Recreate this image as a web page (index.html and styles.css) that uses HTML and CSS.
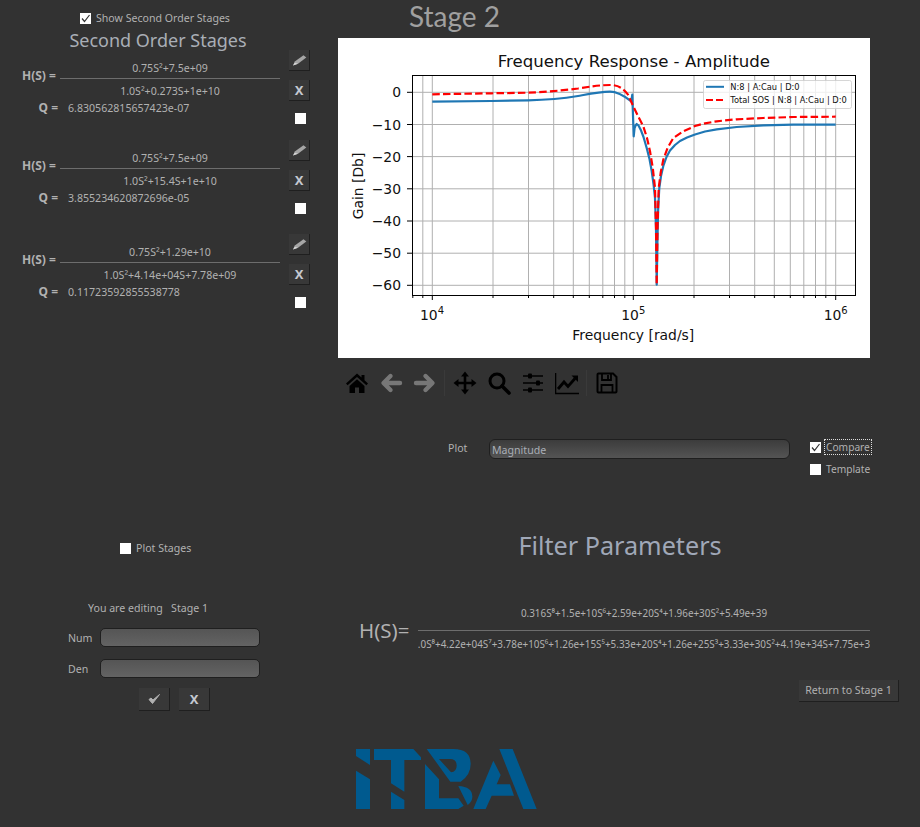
FILE: index.html
```html
<!DOCTYPE html>
<html lang="en">
<head>
    <meta charset="UTF-8">
    <title>Stage 2</title>
    <link rel="stylesheet" href="styles.css">
</head>
<body>
    <div class="app">
        <!-- Left column: second order stages -->
        <div class="left">
            <div class="show-row">
                <span class="box"><svg viewBox="0 0 11 11"><path d="M2 5.5 L4.5 8.5 L9.5 2" fill="none" stroke="#333" stroke-width="1.2"/></svg></span>
                <span>Show Second Order Stages</span>
            </div>
            <div class="sos-title">Second Order Stages</div>

            <div class="stage stage-first">
                <div class="formula">
                    <div class="tf">
                        <div class="tf-label">H(S) =</div>
                        <div class="frac">
                            <div class="num">0.75S²+7.5e+09</div>
                            <div class="bar"></div>
                            <div class="den">1.0S²+0.273S+1e+10</div>
                        </div>
                    </div>
                    <div class="q-row"><span class="q-label">Q =</span><span class="q-value">6.830562815657423e-07</span></div>
                </div>
                <div class="stage-btns">
                    <div class="btn"><svg viewBox="0 0 20 20"><path d="M4 15.5L5.8 11.5L14.5 5.2L17.3 7.4L9 13.8Z" fill="#a6a6a6"/><path d="M4 15.5L5.8 12.8L9 13.8Z" fill="#d8d8d8"/></svg></div>
                    <div class="btn btn-x">X</div>
                    <span class="box box-stage"></span>
                </div>
            </div>

            <div class="stage">
                <div class="formula">
                    <div class="tf">
                        <div class="tf-label">H(S) =</div>
                        <div class="frac">
                            <div class="num">0.75S²+7.5e+09</div>
                            <div class="bar"></div>
                            <div class="den">1.0S²+15.4S+1e+10</div>
                        </div>
                    </div>
                    <div class="q-row"><span class="q-label">Q =</span><span class="q-value">3.855234620872696e-05</span></div>
                </div>
                <div class="stage-btns">
                    <div class="btn"><svg viewBox="0 0 20 20"><path d="M4 15.5L5.8 11.5L14.5 5.2L17.3 7.4L9 13.8Z" fill="#a6a6a6"/><path d="M4 15.5L5.8 12.8L9 13.8Z" fill="#d8d8d8"/></svg></div>
                    <div class="btn btn-x">X</div>
                    <span class="box box-stage"></span>
                </div>
            </div>

            <div class="stage">
                <div class="formula">
                    <div class="tf">
                        <div class="tf-label">H(S) =</div>
                        <div class="frac">
                            <div class="num">0.75S²+1.29e+10</div>
                            <div class="bar"></div>
                            <div class="den">1.0S²+4.14e+04S+7.78e+09</div>
                        </div>
                    </div>
                    <div class="q-row"><span class="q-label">Q =</span><span class="q-value">0.11723592855538778</span></div>
                </div>
                <div class="stage-btns">
                    <div class="btn"><svg viewBox="0 0 20 20"><path d="M4 15.5L5.8 11.5L14.5 5.2L17.3 7.4L9 13.8Z" fill="#a6a6a6"/><path d="M4 15.5L5.8 12.8L9 13.8Z" fill="#d8d8d8"/></svg></div>
                    <div class="btn btn-x">X</div>
                    <span class="box box-stage"></span>
                </div>
            </div>

            <div class="plot-stages">
                <span class="box"></span>
                <span>Plot Stages</span>
            </div>

            <div class="editing">You are editing&nbsp;&nbsp; Stage 1</div>
            <div class="edit-row"><span class="edit-label">Num</span><div class="edit-input"></div></div>
            <div class="edit-row"><span class="edit-label">Den</span><div class="edit-input"></div></div>
            <div class="edit-btns">
                <div class="btn btn-wide"><svg viewBox="0 0 30 22"><path d="M10 11.5L13.5 15.5L20.5 6.5L14 12L12 10Z" fill="#b1b1b1" stroke="#b1b1b1" stroke-width="1"/></svg></div>
                <div class="btn btn-wide btn-x">X</div>
            </div>
        </div>

        <!-- Right column: plot and filter parameters -->
        <div class="right">
            <div class="stage-title">Stage 2</div>
            <svg class="plot" width="532" height="320" viewBox="0 0 532 320">
                <rect width="532" height="320" fill="#fff"/>
                <!-- grid -->
                <path fill="none" stroke="#b0b0b0" stroke-width="1" d="M84.8 37V257M94.3 37V257M155 37V257M190.5 37V257M215.7 37V257M235.3 37V257M251.3 37V257M264.8 37V257M276.5 37V257M286.8 37V257M295.3 37V257M356 37V257M391.5 37V257M416.7 37V257M436.3 37V257M452.3 37V257M465.8 37V257M477.5 37V257M487.8 37V257M497.7 37V257M74 54.3H517M74 86.5H517M74 118.6H517M74 150.8H517M74 183H517M74 215.2H517M74 247.3H517"/>
                <!-- curves -->
                <path fill="none" stroke="#1f77b4" stroke-width="2.2" stroke-linejoin="round" d="M94.3 63.7L153.3 63L190 62.3C205 62 225 60.5 240 58C252 55.8 262 53.7 272 53.7C279 53.7 285 57 293.3 63.3L294.3 56.7L295.7 98.3L296.6 90L297.7 87.3L298.7 86L300.5 87.5L302.7 91.7L305.5 99L308.7 110L311.5 121L313.7 133L315.5 146L317 160L318 190L318.7 246.7L319.5 200L320.2 170L321.3 150L323 138L325.3 128L328.5 119L332 112.5L337 107L342 103L349 99.5L357 96.5L367 93.5L378.7 91.3L398.7 89L425.3 87.3L455.3 86.7L497.7 86.7"/>
                <path fill="none" stroke="#f00" stroke-width="2.2" stroke-dasharray="7.5 3.2" stroke-linejoin="round" d="M94.3 56.3L153.3 55.3L190 54.7C205 54.2 225 52.5 240 50.5C252 48.7 262 47 272 47C280 47 285 50 290 56.7L295.3 68.3L300 78L305.3 88.3L309 100L312 113.3L314.8 130L317 150L318 190L318.7 246.7L319.5 190L320.7 150L322.8 134L325.3 121.7L329.5 110L335.3 100L345 93.5L357 88L367 85.3L378.7 83.3L398.7 81.3L425.3 80L455.3 79L497.7 78.7"/>
                <!-- ticks -->
                <path fill="none" stroke="#000" stroke-width="1" d="M94.3 257V262M295.3 257V262M497.7 257V262M74 54.3H69M74 86.5H69M74 118.6H69M74 150.8H69M74 183H69M74 215.2H69M74 247.3H69M74.8 257V260M84.8 257V260M155 257V260M190.5 257V260M215.7 257V260M235.3 257V260M251.3 257V260M264.8 257V260M276.5 257V260M286.8 257V260M356 257V260M391.5 257V260M416.7 257V260M436.3 257V260M452.3 257V260M465.8 257V260M477.5 257V260M487.8 257V260"/>
                <rect x="74.5" y="37.5" width="443" height="220" fill="none" stroke="#000" stroke-width="1"/>
                <!-- legend -->
                <rect x="365.5" y="42.5" width="148" height="28" rx="2" fill="#fff" fill-opacity="0.8" stroke="#ccc" stroke-opacity="0.8"/>
                <path d="M368 48.8H386" stroke="#1f77b4" stroke-width="2"/>
                <path d="M368 62H386" stroke="#f00" stroke-width="2" stroke-dasharray="7 3"/>
                <g class="plot-text">
                    <text class="legend-text" x="392.3" y="52">N:8 | A:Cau | D:0</text>
                    <text class="legend-text" x="392.3" y="65">Total SOS | N:8 | A:Cau | D:0</text>
                    <text class="plot-title" x="295.8" y="29" text-anchor="middle">Frequency Response - Amplitude</text>
                    <text x="63" y="59" text-anchor="end">0</text>
                    <text x="63" y="91.5" text-anchor="end">−10</text>
                    <text x="63" y="123.6" text-anchor="end">−20</text>
                    <text x="63" y="155.8" text-anchor="end">−30</text>
                    <text x="63" y="188" text-anchor="end">−40</text>
                    <text x="63" y="220.2" text-anchor="end">−50</text>
                    <text x="63" y="252.3" text-anchor="end">−60</text>
                    <text x="94" y="281.5" text-anchor="middle">10<tspan class="exp" dy="-6">4</tspan></text>
                    <text x="295.3" y="281.5" text-anchor="middle">10<tspan class="exp" dy="-6">5</tspan></text>
                    <text x="497.7" y="281.5" text-anchor="middle">10<tspan class="exp" dy="-6">6</tspan></text>
                    <text x="295.3" y="301.5" text-anchor="middle">Frequency [rad/s]</text>
                    <text transform="translate(25 148) rotate(-90)" text-anchor="middle">Gain [Db]</text>
                </g>
            </svg>

            <div class="toolbar">
                <div class="tool"><svg viewBox="0 0 24 24"><path d="M12 2.5L1 12.5L2.6 14.3L12 6L21.4 14.3L23 12.5L19.5 9.3V4H16.5V6.6ZM4.5 15V22H10V16.5H14V22H19.5V15L12 8.3Z"/></svg></div>
                <div class="tool"><svg viewBox="0 0 24 24"><path d="M21 12H5M11.5 5L4.5 12L11.5 19" fill="none" stroke="#777" stroke-width="4.4" stroke-linecap="round" stroke-linejoin="round"/></svg></div>
                <div class="tool"><svg viewBox="0 0 24 24"><path d="M3 12H19M12.5 5L19.5 12L12.5 19" fill="none" stroke="#777" stroke-width="4.4" stroke-linecap="round" stroke-linejoin="round"/></svg></div>
                <div class="tool-sep"></div>
                <div class="tool"><svg viewBox="0 0 24 24"><path d="M12 3V21M3 12H21" stroke="#000" stroke-width="2.6"/><path d="M12 0.5L16 5.5H8ZM12 23.5L8 18.5H16ZM0.5 12L5.5 8V16ZM23.5 12L18.5 16V8Z"/></svg></div>
                <div class="tool"><svg viewBox="0 0 24 24"><circle cx="10" cy="10" r="7" fill="none" stroke="#000" stroke-width="3"/><path d="M15 15L22 22" stroke="#000" stroke-width="3.6" stroke-linecap="round"/></svg></div>
                <div class="tool"><svg viewBox="0 0 24 24"><path d="M2 5H22M2 12H22M2 19H22" stroke="#000" stroke-width="1.6"/><rect x="7" y="2.5" width="4" height="5" rx="1"/><rect x="15" y="9.5" width="4" height="5" rx="1"/><rect x="7" y="16.5" width="4" height="5" rx="1"/></svg></div>
                <div class="tool"><svg viewBox="0 0 24 24"><path d="M0.5 2V22.5H24" fill="none" stroke="#000" stroke-width="1.6"/><path d="M3 18L9 11L13 15.5L20 7.5" fill="none" stroke="#000" stroke-width="2.8"/><path d="M16.5 4.5H23V11Z"/></svg></div>
                <div class="tool-sep"></div>
                <div class="tool"><svg viewBox="0 0 24 24"><path d="M3.5 2.5H18L21.5 6V20.5Q21.5 21.5 20.5 21.5H3.5Q2.5 21.5 2.5 20.5V3.5Q2.5 2.5 3.5 2.5Z" fill="none" stroke="#000" stroke-width="2"/><path d="M7 3V9H16V3M13 4V8M6.5 21V14H17.5V21" fill="none" stroke="#000" stroke-width="1.8"/></svg></div>
            </div>

            <div class="plot-row">
                <span class="plot-label">Plot</span>
                <div class="combo">Magnitude</div>
                <div class="plot-checks">
                    <div class="check-row"><span class="box"><svg viewBox="0 0 11 11"><path d="M2 5.5 L4.5 8.5 L9.5 2" fill="none" stroke="#333" stroke-width="1.2"/></svg></span><span class="focus">Compare</span></div>
                    <div class="check-row"><span class="box"></span><span class="nofocus">Template</span></div>
                </div>
            </div>

            <div class="filter-title">Filter Parameters</div>

            <div class="big-tf">
                <div class="big-label">H(S)=</div>
                <div class="big-frac">
                    <div class="big-line">0.316S⁸+1.5e+10S⁶+2.59e+20S⁴+1.96e+30S²+5.49e+39</div>
                    <div class="bar"></div>
                    <div class="big-line big-den"><span>1.0S⁸+4.22e+04S⁷+3.78e+10S⁶+1.26e+15S⁵+5.33e+20S⁴+1.26e+25S³+3.33e+30S²+4.19e+34S+7.75e+39</span></div>
                </div>
            </div>

            <div class="return-btn">Return to Stage 1</div>

            <svg class="logo" width="200" height="80" viewBox="0 0 600 240">
                <g fill="#005a8f">
                    <path d="M33 27H75V75L33 48ZM33 92L75 118V207H33Z"/>
                    <path d="M87 27H205L228 52V60H178V155L138 130V60H87ZM138 155L178 180V207H138Z"/>
                    <path fill-rule="evenodd" d="M245 27H325Q377 27 377 72Q377 105 347 125L316 125ZM282 57H315Q335 57 335 77Q335 95 318 97Z"/>
                    <path d="M240 72L282 118V175H340L356 197L340 207H240Z"/>
                    <path d="M340 138Q382 140 382 170Q382 185 368 195Z"/>
                    <path d="M385 207L445 62L467 105L455 133H495L507 167H440L422 207Z"/>
                    <path d="M463 27H503L575 207H535Z"/>
                </g>
            </svg>
        </div>
    </div>
</body>
</html>
```

FILE: styles.css
```css
/* General */
body {
    margin: 0;
    background: #323232;
    color: #b1b1b1;
    font-family: 'Noto Sans', sans-serif;
    font-size: 10.6px;
}

.app {
    display: flex;
    width: 920px;
    height: 827px;
    overflow: hidden;
}

.left {
    width: 338px;
    flex-shrink: 0;
}

.right {
    width: 582px;
}

.box {
    display: block;
    width: 11px;
    height: 11px;
    background: #fff;
    flex-shrink: 0;
}

.box svg {
    display: block;
}

/* Second order stages */
.show-row {
    display: flex;
    align-items: center;
    gap: 5px;
    height: 20px;
    margin-top: 8px;
    padding-left: 80px;
}

.sos-title {
    height: 20px;
    margin-top: 2px;
    width: 316px;
    text-align: center;
    font-size: 18px;
    line-height: 20px;
    color: #a9aeb6;
}

.stage {
    display: flex;
    height: 94px;
}

.stage-first {
    height: 90px;
}

.formula {
    width: 289px;
    padding-top: 10px;
    box-sizing: border-box;
}

.tf {
    display: flex;
}

.tf-label {
    width: 38px;
    margin-left: 22px;
    margin-top: 7px;
    font-size: 12px;
    font-weight: bold;
    white-space: nowrap;
}

.frac {
    width: 220px;
    text-align: center;
    line-height: 16px;
}

.bar {
    height: 1px;
    background: #6d6d6d;
}

.num {
    height: 16px;
    margin-bottom: 2px;
}

.den {
    height: 16px;
    margin-top: 4px;
}

.q-row {
    display: flex;
    height: 16px;
    margin-top: 1px;
    line-height: 16px;
}

.q-label {
    width: 36px;
    margin-left: 22px;
    text-align: right;
    font-size: 12px;
    font-weight: bold;
}

.q-value {
    margin-left: 10px;
}

.stage-btns {
    display: flex;
    flex-direction: column;
    gap: 9px;
    width: 21px;
}

.btn {
    display: flex;
    align-items: center;
    justify-content: center;
    width: 21px;
    height: 21px;
    background: #383838;
    border-right: 1px solid #1f1f1f;
    border-bottom: 1px solid #1f1f1f;
    box-sizing: border-box;
}

.btn svg {
    display: block;
}

.btn-x {
    font-weight: bold;
    font-size: 13px;
    color: #c4c8d0;
}

.box-stage {
    margin-left: 6px;
    margin-top: 3px;
}

/* Editor */
.plot-stages {
    display: flex;
    align-items: center;
    gap: 5px;
    height: 16px;
    margin-top: 212px;
    padding-left: 120px;
}

.editing {
    height: 16px;
    margin-top: 44px;
    padding-left: 88px;
    line-height: 16px;
}

.edit-row {
    display: flex;
    align-items: center;
    height: 19px;
    margin-top: 12px;
    padding-left: 68px;
}

.editing + .edit-row {
    margin-top: 12px;
}

.edit-label {
    width: 32px;
}

.edit-input {
    width: 160px;
    height: 19px;
    box-sizing: border-box;
    border: 1px solid #1f1f1f;
    border-radius: 5px;
    background: linear-gradient(#555, #636363);
}

.edit-btns {
    display: flex;
    gap: 9px;
    margin-top: 10px;
    padding-left: 139px;
}

.btn-wide {
    width: 31px;
    height: 23px;
}

/* Plot */
.stage-title {
    height: 38px;
    padding-left: 71px;
    font-family: Lato, sans-serif;
    font-size: 28px;
    line-height: 32px;
    color: #a0a0a0;
}

.plot {
    display: block;
}

.plot-text text {
    font-family: 'DejaVu Sans', sans-serif;
    font-size: 13.9px;
    fill: #111;
}

.plot-text .plot-title {
    font-size: 16.6px;
}

.plot-text .legend-text {
    font-size: 8.3px;
}

.exp {
    font-size: 10px;
}

.toolbar {
    display: flex;
    align-items: center;
    height: 50px;
    padding-left: 2px;
}

.tool {
    display: flex;
    justify-content: center;
    width: 34px;
}

.tool svg {
    display: block;
    width: 24px;
    height: 24px;
}

.tool-sep {
    width: 1px;
    height: 26px;
    margin: 0 3px 0 2px;
    background: #3a3a3a;
}

.plot-row {
    display: flex;
    height: 40px;
    margin-top: 31px;
}

.plot-label {
    margin-left: 110px;
    width: 41px;
    line-height: 18px;
}

.combo {
    width: 301px;
    height: 20px;
    padding-left: 2px;
    box-sizing: border-box;
    border: 1px solid #1f1f1f;
    border-radius: 6px;
    background: linear-gradient(#3c3c3c, #545454);
    line-height: 20px;
    color: #a9aeb6;
}

.plot-checks {
    margin-left: 20px;
    width: 64px;
    font-size: 10.2px;
}

.check-row {
    display: flex;
    align-items: center;
    gap: 3px;
    height: 16px;
    margin-bottom: 6px;
}

.focus {
    border: 1px dotted #ddd;
    padding: 0 1px;
    line-height: 14px;
}

.nofocus {
    padding: 0 2px;
    white-space: nowrap;
}

/* Filter parameters */
.filter-title {
    height: 32px;
    margin-top: 50px;
    width: 564px;
    text-align: center;
    font-size: 25.2px;
    line-height: 32px;
    color: #a0a8b8;
}

.big-tf {
    display: flex;
    align-items: center;
    margin-top: 44px;
    padding-left: 21px;
}

.big-label {
    width: 59px;
    font-size: 20.5px;
    margin-top: 2px;
}

.big-frac {
    width: 452px;
    overflow: hidden;
}

.big-line {
    display: flex;
    justify-content: center;
    height: 16px;
    margin-bottom: 9px;
    font-size: 9.9px;
    line-height: 16px;
    white-space: nowrap;
}

.big-den {
    margin: 5px 0 0;
}

.return-btn {
    width: 100px;
    height: 22px;
    margin-top: 28px;
    margin-left: 461px;
    box-sizing: border-box;
    background: #383838;
    border-bottom: 1px solid #1f1f1f;
    border-right: 1px solid #1f1f1f;
    text-align: center;
    line-height: 21px;
}

.logo {
    display: block;
    margin-top: 38px;
    margin-left: 7px;
}
```
